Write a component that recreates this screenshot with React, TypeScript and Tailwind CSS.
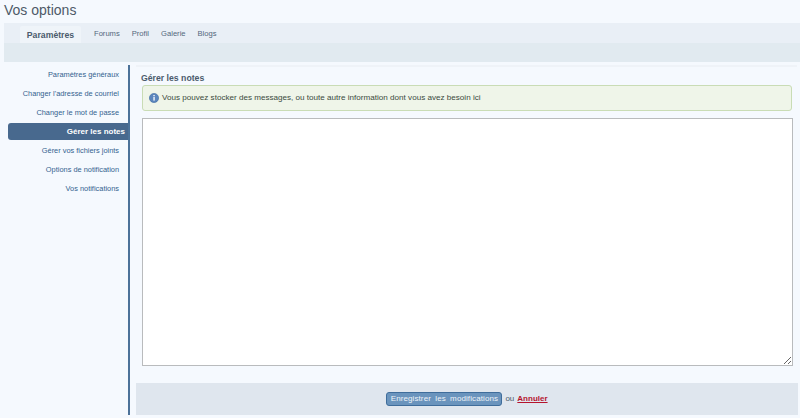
const items = [
  "Paramètres généraux",
  "Changer l'adresse de courriel",
  "Changer le mot de passe",
  "Gérer les notes",
  "Gérer vos fichiers joints",
  "Options de notification",
  "Vos notifications",
];

function InfoIcon() {
  return (
    <svg width="10" height="10" viewBox="0 0 10 10" className="shrink-0">
      <circle cx="5" cy="5" r="4.6" fill="#5b86bd" stroke="#3f6ba3" strokeWidth="0.6" />
      <rect x="4.4" y="2" width="1.3" height="1.3" fill="#ffffff" />
      <rect x="4.4" y="4" width="1.3" height="3.6" fill="#ffffff" />
    </svg>
  );
}

export default function App() {
  return (
    <div className="w-[800px] h-[418px] overflow-hidden bg-[#f5f9fe] font-['Liberation_Sans',sans-serif] text-[8px] text-[#1d4f86]">
      <h1 className="h-[23px] pl-1 text-[14px] leading-[20px] text-[#4d5a68]">Vos options</h1>
      <div className="ml-1">
        <div className="flex h-5 bg-[#e9eff6] pl-4">
          <div className="mt-[3px] flex w-[61px] items-center justify-center rounded-t-[2px] bg-[#eff4f9] pt-[3px] text-[8.7px] font-bold text-[#4b5b6c]">
            Paramètres
          </div>
          <div className="ml-[13px] flex gap-[12px] pt-[5px] text-[7.6px] leading-[11px] text-[#53677c]">
            <span>Forums</span>
            <span>Profil</span>
            <span>Galerie</span>
            <span>Blogs</span>
          </div>
        </div>
        <div className="h-[19px] bg-[#e1eaf0]" />
      </div>
      <div className="mt-[3px] flex h-[350px]">
        <nav className="w-[130px] shrink-0 border-r-[2px] border-[#4c7299] text-[7.4px]">
          {items.map((item, i) =>
            i === 3 ? (
              <div key={item} className="flex h-[19px] items-center">
                <div className="ml-[8px] flex h-[17px] flex-1 items-center justify-end rounded-l-[3px] bg-[#48698e] pr-[3px] text-[8px] font-bold text-white">
                  {item}
                </div>
              </div>
            ) : (
              <div key={item} className="flex h-[19px] items-center justify-end pr-[9px] text-[#33628f]">
                {item}
              </div>
            ),
          )}
        </nav>
        <main className="flex min-w-0 flex-1 flex-col">
          <div className="mr-[3px] ml-[6px] h-[2px] bg-[#eff3f8]" />
          <div className="flex flex-col pr-[7px] pl-[12px]">
            <h2 className="mt-[5px] -ml-px h-[13px] text-[8.7px] leading-[13px] font-bold text-[#4b5b6c]">Gérer les notes</h2>
            <div className="mr-[1px] flex h-[26px] items-center gap-[3px] rounded-[3px] border border-[#c9dcb5] bg-[#eff5e9] pl-[6px] text-[8.1px] text-[#3b4a40]">
              <InfoIcon />
              <span>Vous pouvez stocker des messages, ou toute autre information dont vous avez besoin ici</span>
            </div>
            <textarea className="mt-[7px] block h-[248px] w-full resize-y border border-[#b9bbbd] bg-white outline-none" />
          </div>
          <div className="mt-[17px] mr-[2px] ml-[6px] flex h-[33px] items-center justify-center gap-[3px] bg-[#dfe6ee] text-[#4b5b6c]">
            <button className="h-[14px] w-[116px] rounded-[3px] border border-[#3f6d9b] bg-[#6a94bd] text-[8px] leading-[12px] tracking-[0.1px] [word-spacing:2px] whitespace-nowrap text-[#eef3f8]">
              Enregistrer les modifications
            </button>
            <span>ou</span>
            <a className="font-bold text-[#b5142e] underline">Annuler</a>
          </div>
        </main>
      </div>
    </div>
  );
}
